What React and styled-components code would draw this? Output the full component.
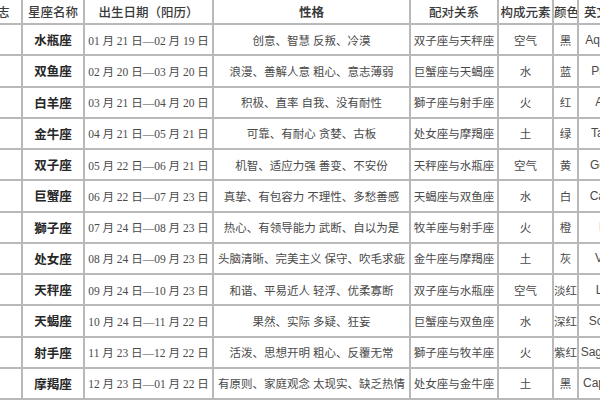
import React from "react";
import styled, { createGlobalStyle } from "styled-components";

const Global = createGlobalStyle`
  html, body { margin: 0; padding: 0; background: #fff; }
  body { overflow: hidden; }
`;

const Frame = styled.div`
  width: 600px;
  height: 400px;
  overflow: hidden;
  background: #fff;
`;

const Table = styled.table`
  border-collapse: collapse;
  table-layout: fixed;
  width: 668px;
  margin-left: -29px;
  margin-top: -2px;
`;

const HeadRow = styled.tr`
  height: 25px;
`;

const BodyRow = styled.tr`
  height: 31.25px;
`;

const HeadCell = styled.th`
  border: 2px solid #b9b9b9;
  padding: 0;
  text-align: center;
  vertical-align: middle;
  white-space: nowrap;
  overflow: hidden;
  font-family: "Noto Sans CJK SC", "Noto Sans", sans-serif;
  font-size: 12.5px;
  font-weight: ${(p) => (p.$strong ? 700 : 500)};
  color: #3a3a3a;
`;

const fonts = {
  name: `"Noto Sans CJK SC", sans-serif`,
  date: `"Liberation Serif", "Noto Sans CJK SC", serif`,
  text: `"Liberation Serif", "Noto Sans CJK SC", serif`,
  en: `"Liberation Sans", Arial, sans-serif`,
};

const Cell = styled.td`
  border: 2px solid #b9b9b9;
  padding: 0;
  text-align: center;
  vertical-align: middle;
  white-space: nowrap;
  overflow: hidden;
  font-family: ${(p) => fonts[p.$kind || "text"]};
  font-size: ${(p) => (p.$kind === "name" ? "12.5px" : p.$kind === "en" ? "12px" : "11.5px")};
  font-weight: ${(p) => (p.$kind === "name" ? 700 : 400)};
  color: ${(p) => (p.$kind === "name" ? "#262626" : "#4a4a4a")};
`;

const widths = [50, 62, 129, 197, 88, 55, 25, 62];
const headers = ["标志", "星座名称", "出生日期（阳历）", "性格", "配对关系", "构成元素", "颜色", "英文名称"];

const rows = [
  ["水瓶座", "01 月 21 日—02 月 19 日", "创意、智慧 反叛、冷漠", "双子座与天秤座", "空气", "黑", "Aquarius"],
  ["双鱼座", "02 月 20 日—03 月 20 日", "浪漫、善解人意 粗心、意志薄弱", "巨蟹座与天蝎座", "水", "蓝", "Pisces"],
  ["白羊座", "03 月 21 日—04 月 20 日", "积极、直率 自我、没有耐性", "獅子座与射手座", "火", "红", "Aries"],
  ["金牛座", "04 月 21 日—05 月 21 日", "可靠、有耐心 贪婪、古板", "处女座与摩羯座", "土", "绿", "Taurus"],
  ["双子座", "05 月 22 日—06 月 21 日", "机智、适应力强 善变、不安份", "天秤座与水瓶座", "空气", "黄", "Gemini"],
  ["巨蟹座", "06 月 22 日—07 月 23 日", "真挚、有包容力 不理性、多愁善感", "天蝎座与双鱼座", "水", "白", "Cancer"],
  ["獅子座", "07 月 24 日—08 月 23 日", "热心、有领导能力 武断、自以为是", "牧羊座与射手座", "火", "橙", "Leo"],
  ["处女座", "08 月 24 日—09 月 23 日", "头脑清晰、完美主义 保守、吹毛求疵", "金牛座与摩羯座", "土", "灰", "Virgo"],
  ["天秤座", "09 月 24 日—10 月 23 日", "和谐、平易近人 轻浮、优柔寡断", "双子座与水瓶座", "空气", "淡红", "Libra"],
  ["天蝎座", "10 月 24 日—11 月 22 日", "果然、实际 多疑、狂妄", "巨蟹座与双鱼座", "水", "深红", "Scorpio"],
  ["射手座", "11 月 23 日—12 月 22 日", "活泼、思想开明 粗心、反覆无常", "獅子座与牧羊座", "火", "紫红", "Sagittarius"],
  ["摩羯座", "12 月 23 日—01 月 22 日", "有原则、家庭观念 太现实、缺乏热情", "处女座与金牛座", "土", "黑", "Capricorn"],
];

export default function App() {
  return (
    <Frame>
      <Global />
      <Table>
        <colgroup>
          {widths.map((w, i) => (
            <col key={i} style={{ width: w }} />
          ))}
        </colgroup>
        <thead>
          <HeadRow>
            {headers.map((h) => (
              <HeadCell key={h} $strong={h === "性格"}>{h}</HeadCell>
            ))}
          </HeadRow>
        </thead>
        <tbody>
          {rows.map((r) => (
            <BodyRow key={r[0]}>
              <Cell />
              <Cell $kind="name">{r[0]}</Cell>
              <Cell $kind="date">{r[1]}</Cell>
              <Cell>{r[2]}</Cell>
              <Cell>{r[3]}</Cell>
              <Cell>{r[4]}</Cell>
              <Cell>{r[5]}</Cell>
              <Cell $kind="en">{r[6]}</Cell>
            </BodyRow>
          ))}
        </tbody>
      </Table>
    </Frame>
  );
}
